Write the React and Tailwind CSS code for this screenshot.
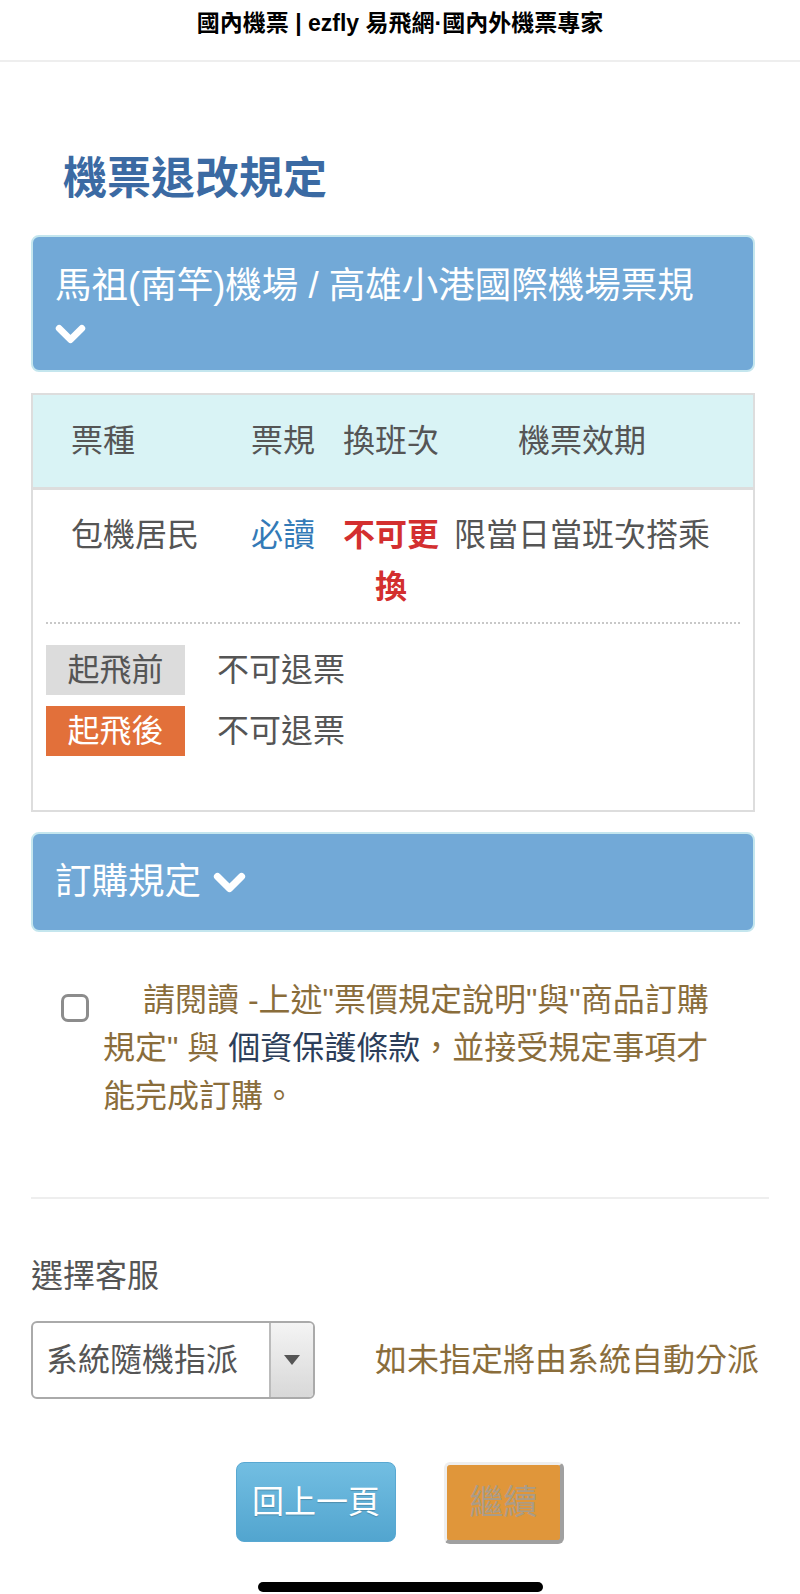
function Chevron({ className }) {
  return (
    <svg className={className} viewBox="0 0 30 21" fill="none">
      <path d="M4 5 L15 16 L26 5" stroke="#fff" strokeWidth="6.5" strokeLinecap="round" strokeLinejoin="round" />
    </svg>
  );
}

function Panel({ children, className }) {
  return (
    <div className={"w-[724px] rounded-[8px] border-2 border-[#c4e6ee] bg-[#72a9d7] text-white " + className}>
      {children}
    </div>
  );
}

export default function App() {
  return (
    <div className="w-[800px] h-[1594px] bg-white overflow-hidden [font-family:'Liberation_Sans','Noto_Sans_CJK_TC',sans-serif] text-[#555]">
      {/* top bar */}
      <div className="h-[62px] border-b-2 border-[#eeeeee] pt-[9px] text-center text-[23px] leading-[28px] font-bold text-black">
        國內機票 <span className="font-black">| ezfly</span> 易飛網·國內外機票專家
      </div>

      <div className="px-[31px]">
        <h1 className="mt-[95px] pl-[32px] text-[44px] leading-[44px] font-bold text-[#3b6aa3]">機票退改規定</h1>

        <Panel className="mt-[34px] px-[22px] pt-[27px] pb-[25px]">
          <div className="text-[36.5px] leading-[44px] whitespace-nowrap">馬祖(南竿)機場 / 高雄小港國際機場票規</div>
          <Chevron className="mt-[15px] w-[31px] h-[22px]" />
        </Panel>

        {/* fare table */}
        <div className="mt-[21px] w-[724px] border-2 border-[#dddddd] pb-[54px]">
          <div className="flex bg-[#d9f3f5] border-b-[3px] border-[#dddddd] pl-[38px] py-[22px] text-[32px] leading-[48px] text-[#555]">
            <div className="w-[178px]">票種</div>
            <div className="w-[68px] text-center">票規</div>
            <div className="w-[100px] ml-[24px] text-center">換班次</div>
            <div className="w-[270px] ml-[6px] text-center">機票效期</div>
          </div>
          <div className="flex pl-[38px] pt-[19px] pb-[9px] text-[32px] leading-[52px]">
            <div className="w-[178px]">包機居民</div>
            <div className="w-[68px] text-center text-[#337ab7]">必讀</div>
            <div className="w-[100px] ml-[24px] text-center font-bold text-[#d32f2f]">不可更換</div>
            <div className="w-[270px] ml-[6px] text-center">限當日當班次搭乘</div>
          </div>
          <div className="mx-[13px] border-t-2 border-dotted border-[#c8c8c8]" />
          <div className="mt-[21px] ml-[13px] flex flex-col gap-[11px] text-[32px]">
            <div className="flex items-center">
              <span className="w-[139px] h-[50px] flex items-center justify-center bg-[#dcdcdc] text-[#555]">起飛前</span>
              <span className="ml-[32px]">不可退票</span>
            </div>
            <div className="flex items-center">
              <span className="w-[139px] h-[50px] flex items-center justify-center bg-[#e2703a] text-white">起飛後</span>
              <span className="ml-[32px]">不可退票</span>
            </div>
          </div>
        </div>

        <Panel className="mt-[20px] h-[100px] px-[22px] flex items-center">
          <span className="text-[36.5px] leading-[44px]">訂購規定</span>
          <Chevron className="ml-[12px] w-[33px] h-[23px]" />
        </Panel>

        {/* agreement */}
        <div className="mt-[44px] flex">
          <div className="ml-[30px] mt-[18px] w-[28px] h-[28px] shrink-0 rounded-[7px] border-[3px] border-[#8c8c8c] bg-white" />
          <div className="ml-[14px] text-[32px] leading-[48px] text-[#8a6d3b] whitespace-nowrap">
            <div className="pl-[40px]">請閱讀 -上述"票價規定說明"與"商品訂購</div>
            <div>規定" 與 <span className="text-[#2c3e5a]">個資保護條款</span>，並接受規定事項才</div>
            <div>能完成訂購。</div>
          </div>
        </div>

        <div className="mt-[77px] w-[738px] h-[2px] bg-[#eeeeee]" />

        <div className="mt-[53px] text-[32px] leading-[48px] text-[#555]">選擇客服</div>

        <div className="mt-[21px] flex items-center">
          <div className="w-[284px] h-[78px] flex rounded-[6px] border-2 border-[#aaaaaa] overflow-hidden">
            <div className="flex-1 flex items-center pl-[13px] text-[32px] text-[#555]">系統隨機指派</div>
            <div className="w-[44px] flex items-center justify-center border-l-2 border-[#bbbbbb] bg-gradient-to-b from-[#f4f4f4] to-[#d8d8d8]">
              <svg width="18" height="12" viewBox="0 0 18 12">
                <path d="M1 1 L17 1 L9 11 Z" fill="#555" />
              </svg>
            </div>
          </div>
          <div className="ml-[60px] text-[32px] text-[#8a6d3b] whitespace-nowrap">如未指定將由系統自動分派</div>
        </div>
      </div>

      {/* buttons */}
      <div className="mt-[63px] flex justify-center gap-[48px]">
        <div className="w-[160px] h-[80px] flex items-center justify-center rounded-[8px] border border-[#58a8d2] bg-gradient-to-b from-[#72bee2] to-[#52a5cf] text-white text-[32px] [text-shadow:0_1px_1px_rgba(0,0,0,0.2)]">
          回上一頁
        </div>
        <div className="w-[120px] h-[82px] flex items-center justify-center rounded-[6px] border-t-[3px] border-l-[3px] border-r-[4px] border-b-[4px] border-t-[#eeeeee] border-l-[#eeeeee] border-r-[#a0a0a0] border-b-[#a0a0a0] bg-[#e0963a] text-[34px] text-[#aa9c88]">
          繼續
        </div>
      </div>

      <div className="mt-[38px] mx-auto w-[285px] h-[10px] rounded-full bg-black" />
    </div>
  );
}
